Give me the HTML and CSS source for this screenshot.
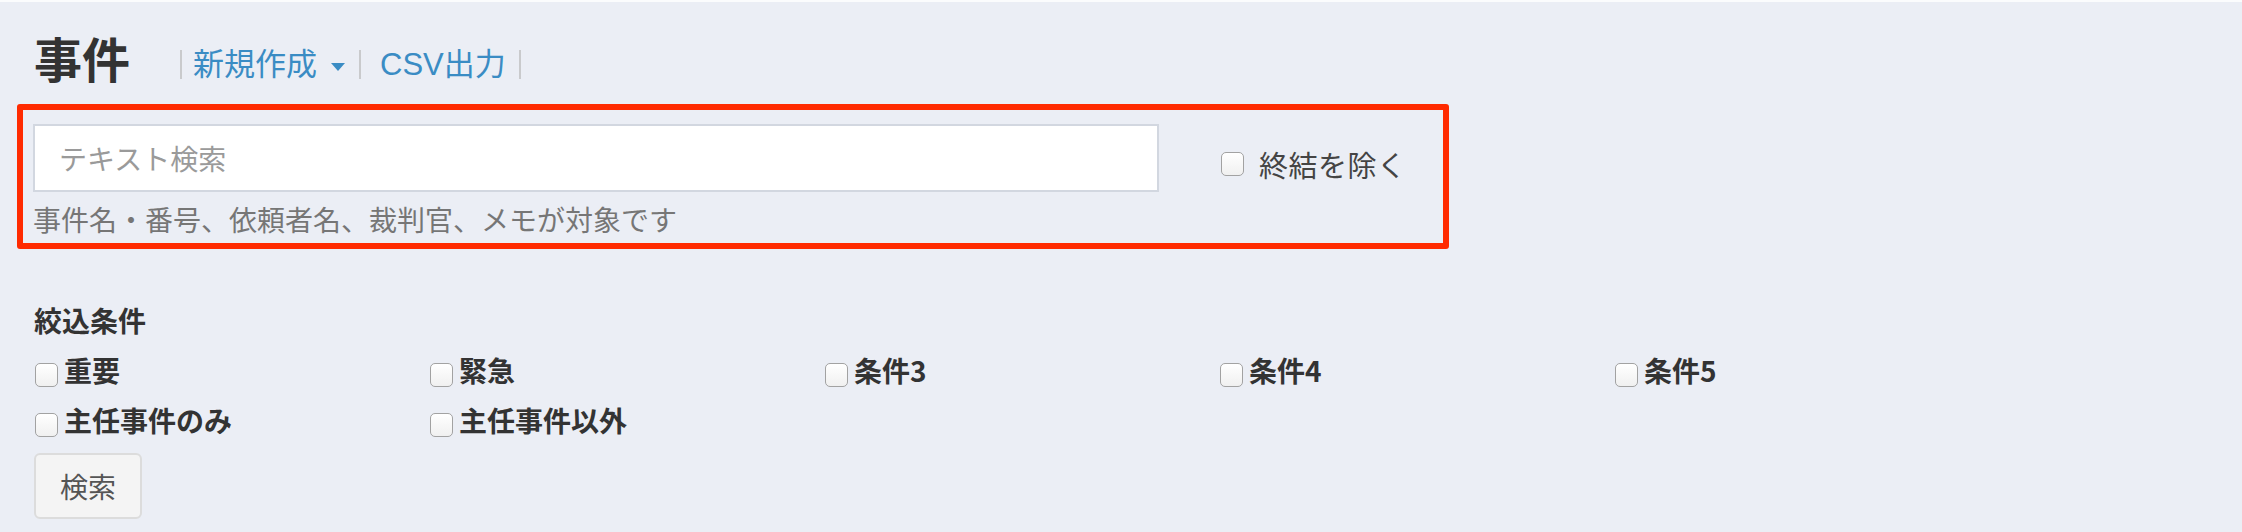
FILE: index.html
```html
<!DOCTYPE html>
<html lang="ja">
<head>
<meta charset="utf-8">
<title>事件</title>
<link rel="stylesheet" href="styles.css">
</head>
<body>
<div class="page">
  <header class="page-header">
    <h1 class="title">事件</h1>
    <ul class="actions">
      <li class="action action-new"><a class="action-link">新規作成<span class="caret"></span></a></li>
      <li class="action action-csv"><a class="action-link">CSV出力</a></li>
    </ul>
  </header>

  <form class="search">
    <div class="search-box">
      <div class="search-main">
        <input class="search-input" type="text" placeholder="テキスト検索">
        <p class="help">事件名・番号、依頼者名、裁判官、メモが対象です</p>
      </div>
      <label class="exclude"><input class="check check-lg" type="checkbox"><span class="exclude-text">終結を除く</span></label>
    </div>

    <div class="filters">
      <div class="filters-title">絞込条件</div>
      <div class="filter-grid">
        <label class="filter"><input class="check" type="checkbox"><span>重要</span></label>
        <label class="filter"><input class="check" type="checkbox"><span>緊急</span></label>
        <label class="filter"><input class="check" type="checkbox"><span>条件3</span></label>
        <label class="filter"><input class="check" type="checkbox"><span>条件4</span></label>
        <label class="filter"><input class="check" type="checkbox"><span>条件5</span></label>
        <label class="filter"><input class="check" type="checkbox"><span>主任事件のみ</span></label>
        <label class="filter"><input class="check" type="checkbox"><span>主任事件以外</span></label>
      </div>
      <button class="btn" type="button">検索</button>
    </div>
  </form>
</div>
</body>
</html>
```

FILE: styles.css
```css
html, body {
  height: 100%;
}

body {
  margin: 0;
  background: #ebeef5;
  border-top: 2px solid #fbfcfd;
  box-sizing: border-box;
  font-family: "Noto Sans CJK JP", sans-serif;
  color: #333;
}

.page {
  padding: 0 34px;
}

/* header */
.page-header {
  display: flex;
  align-items: flex-end;
  margin-top: 25px;
}

.title {
  margin: 0 50px 0 0;
  font-size: 48px;
  line-height: 60px;
  font-weight: 700;
  color: #333;
}

.actions {
  display: flex;
  list-style: none;
  margin: 0 0 8px;
  padding: 0;
  font-family: "Liberation Sans", "Noto Sans CJK JP", sans-serif;
  font-size: 31px;
  line-height: 29px;
}

.action {
  border-left: 2px solid #c9cacc;
}

.action-new {
  padding: 0 14px 0 11px;
}

.action-csv {
  padding: 0 13px 0 19px;
  border-right: 2px solid #c9cacc;
}

.action-link {
  color: #3a8cc4;
  text-decoration: none;
  cursor: pointer;
}

.caret {
  display: inline-block;
  width: 0;
  height: 0;
  margin-left: 14px;
  vertical-align: middle;
  border-top: 8px solid #3a8cc4;
  border-left: 7px solid transparent;
  border-right: 7px solid transparent;
}

/* search box */
.search {
  margin: 0;
}

.search-box {
  display: flex;
  align-items: flex-start;
  box-sizing: border-box;
  width: 1432px;
  margin: 17px -17px 0;
  padding: 14px 10px 4px;
  border: 6px solid #ff2a00;
  border-radius: 3px;
}

.search-main {
  width: 1126px;
  flex: none;
}

.search-input {
  display: block;
  box-sizing: border-box;
  width: 100%;
  height: 68px;
  margin: 0;
  padding: 0 24px;
  border: 2px solid #d2d7e0;
  border-radius: 0;
  background: #fff;
  font-family: "Noto Sans CJK JP", sans-serif;
  font-size: 28px;
  color: #555;
  outline: none;
}

.search-input::placeholder {
  color: #9a9a9a;
}

.help {
  margin: 7px 0 0;
  font-size: 28px;
  line-height: 40px;
  color: #767676;
}

.exclude {
  display: flex;
  align-items: center;
  margin: 20px 0 0 62px;
  font-size: 29px;
  line-height: 40px;
  letter-spacing: 0.5px;
  color: #444;
}

.exclude-text {
  margin-left: 15px;
}

/* checkboxes */
.check {
  appearance: none;
  -webkit-appearance: none;
  flex: none;
  box-sizing: border-box;
  width: 23px;
  height: 24px;
  margin: 0;
  border: 1.5px solid #a2a2a2;
  border-radius: 5px;
  background: linear-gradient(#ffffff, #f0f0f0);
}

.check-lg {
  width: 23px;
  height: 24px;
}

/* filters */
.filters {
  margin-top: 51px;
}

.filters-title {
  margin: 0 0 10px;
  font-size: 28px;
  line-height: 40px;
  font-weight: 700;
  color: #333;
}

.filter-grid {
  display: grid;
  grid-template-columns: repeat(5, 395px);
  row-gap: 10px;
}

.filter {
  display: flex;
  align-items: flex-start;
  font-size: 28px;
  line-height: 40px;
  font-weight: 700;
  color: #333;
}

.filter .check {
  margin: 13px 6px 0 1px;
}

.btn {
  display: block;
  margin-top: 13px;
  padding: 11px 24px;
  border: 2px solid #dcdcdc;
  border-radius: 6px;
  background: #f4f4f4;
  font-family: "Noto Sans CJK JP", sans-serif;
  font-size: 28px;
  line-height: 40px;
  font-weight: 400;
  color: #555;
}
```
